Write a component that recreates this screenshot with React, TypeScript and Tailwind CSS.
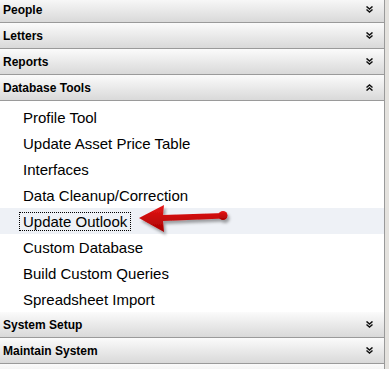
import React from 'react';

const sections = ['People', 'Letters', 'Reports', 'Database Tools'];
const tools = [
  'Profile Tool',
  'Update Asset Price Table',
  'Interfaces',
  'Data Cleanup/Correction',
  'Update Outlook',
  'Custom Database',
  'Build Custom Queries',
  'Spreadsheet Import',
];

const Chevrons: React.FC<{ up?: boolean }> = ({ up }) => (
  <svg width="7" height="7" viewBox="0 0 7 7" className={up ? 'rotate-180' : ''}>
    <path d="M0.5 0.5 L3.5 3 L6.5 0.5 M0.5 3.5 L3.5 6 L6.5 3.5" stroke="#111" strokeWidth="1.5" fill="none" />
  </svg>
);

const Header: React.FC<{ title: string; open?: boolean }> = ({ title, open }) => (
  <div className="h-[26px] flex items-center justify-between pl-[3px] pr-[11px] border-b border-[#9a9a9a] bg-gradient-to-b from-[#fbfbfb] to-[#d9d9d9]">
    <span className="text-[12px] font-bold text-black font-['Liberation_Sans',Arial,sans-serif]">{title}</span>
    <Chevrons up={open} />
  </div>
);

const Arrow: React.FC = () => (
  <svg width="100" height="36" viewBox="0 0 100 36" className="absolute left-[136px] top-[-4px] pointer-events-none">
    <defs>
      <linearGradient id="red" x1="0" y1="0" x2="0" y2="1">
        <stop offset="0" stopColor="#e81818" />
        <stop offset="1" stopColor="#a80000" />
      </linearGradient>
      <filter id="sh" x="-20%" y="-40%" width="140%" height="180%">
        <feDropShadow dx="2" dy="3" stdDeviation="1.5" floodColor="#000" floodOpacity="0.35" />
      </filter>
    </defs>
    <g filter="url(#sh)">
      <path d="M3 14 L28 1 L27 11 L88 9 L88 14.5 L27 17 L28 28 Z" fill="url(#red)" />
      <circle cx="87" cy="11.5" r="4.5" fill="url(#red)" />
    </g>
  </svg>
);

export default function App() {
  return (
    <div className="w-[389px] h-[369px] overflow-hidden bg-[#e4e2de] font-['Liberation_Sans',Arial,sans-serif]">
      <div className="w-[385px] mt-[-3px] bg-white border-r border-[#9a9a9a]">
        {sections.map((s) => (
          <Header key={s} title={s} open={s === 'Database Tools'} />
        ))}
        <ul className="pt-[3px]">
          {tools.map((t) => {
            const active = t === 'Update Outlook';
            return (
              <li key={t} className={`relative h-[26px] flex items-center pl-[19px] text-[15px] text-black ${active ? 'bg-[#eef1f6]' : ''}`}>
                <span className={`leading-[17px] px-[3px] border ${active ? 'border-dotted border-black' : 'border-transparent'}`}>{t}</span>
                {active && <Arrow />}
              </li>
            );
          })}
        </ul>
        <Header title="System Setup" />
        <Header title="Maintain System" />
        <div className="h-[26px] bg-gradient-to-b from-[#fbfbfb] to-[#d9d9d9]" />
      </div>
    </div>
  );
}
